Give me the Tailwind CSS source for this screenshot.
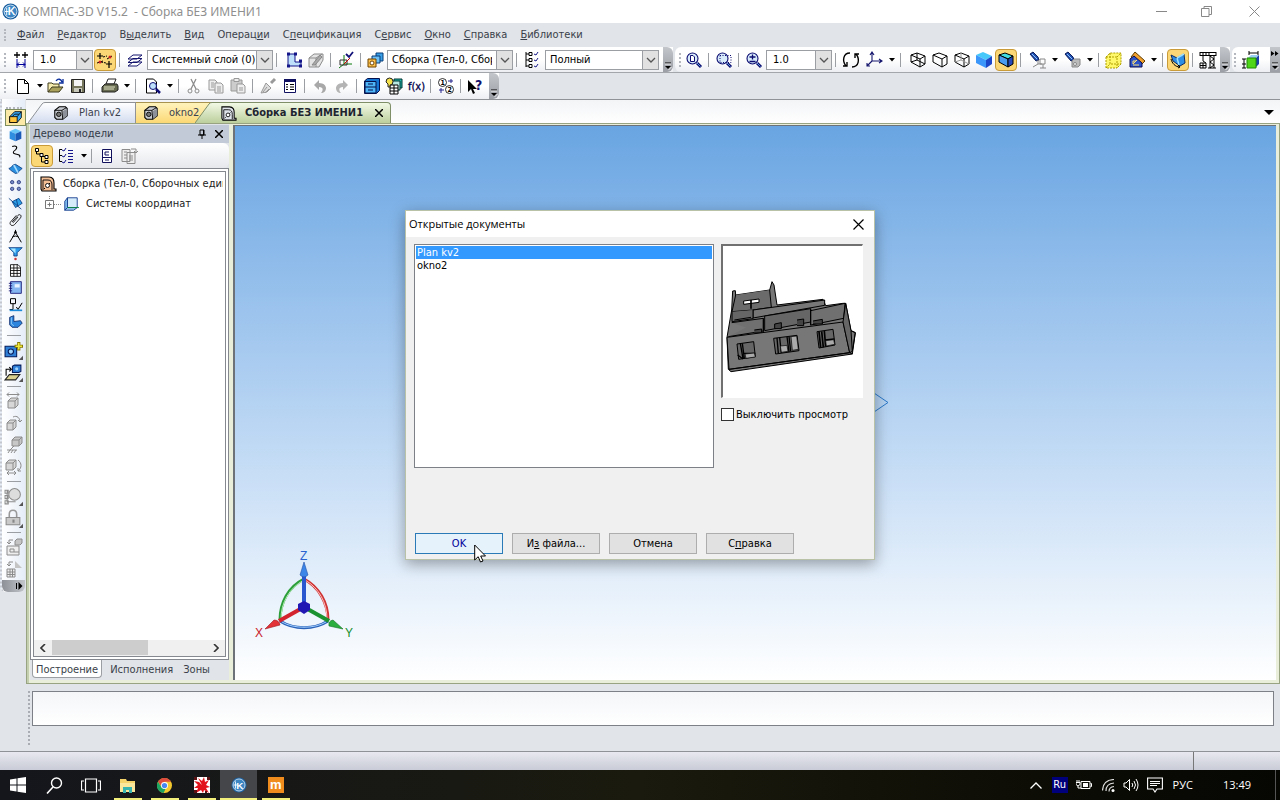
<!DOCTYPE html>
<html lang="ru">
<head>
    <meta charset="UTF-8">
    <meta name="viewport" content="width=device-width, initial-scale=1.0">
    <title>КОМПАС-3D V15.2 - Сборка БЕЗ ИМЕНИ1</title>
    <script src="https://cdn.jsdelivr.net/npm/@tailwindcss/browser@4"></script>
</head>
<body class="relative flex h-screen flex-col overflow-hidden bg-[#e1e4e8] font-['DejaVu_Sans_Condensed','Noto_Sans',sans-serif] text-[11px] leading-4 text-black">

    <!-- Shared icons -->
    <svg class="hidden">
        <symbol id="caret" viewBox="0 0 7 4"><path d="M1 0h6L4 3.500z" fill="#000"/></symbol>
        <symbol id="chevron" viewBox="0 0 10 6"><path d="M1 1l4 4 4-4" fill="none" stroke="#555" stroke-width="1.3"/></symbol>
        <symbol id="overflow" viewBox="0 0 8 8"><path d="M1 1h6" stroke="#000"/><path d="M1 4h6L4 7z" fill="#000"/><path d="M1 2h6M4.500 8l3-3" stroke="#fff" stroke-width=".8"/></symbol>
        <symbol id="logo" viewBox="0 0 18 18">
            <circle cx="9" cy="9" r="8.500" fill="#1c5f9e"/><circle cx="9" cy="9" r="6.800" fill="#3c86c4" stroke="#cfe3f4"/>
            <path d="M3 9h4M5 5v8" stroke="#fff"/>
            <text x="6" y="13" font-size="11" font-weight="bold" fill="#fff" font-family="Liberation Sans">K</text>
        </symbol>
        <symbol id="part" viewBox="0 0 18 18">
            <path d="M2 6l5-4h7l2 2v8l-5 4H4l-2-2z" fill="#c9ccd2" stroke="#000" stroke-width="1.200"/>
            <path d="M11 7l5-3v8l-5 4z" fill="#8c9098"/>
            <path d="M2 6h8l1 10M10 6l5-3" fill="none" stroke="#000"/>
            <circle cx="6.500" cy="10.500" r="2.500" fill="#777" stroke="#000"/>
        </symbol>
        <symbol id="assembly" viewBox="0 0 18 18">
            <path d="M2 2h8c4 0 5 3 5 6v6h2v2H3l-1-2z" fill="currentColor" stroke="#000" stroke-width="1.100"/>
            <path d="M4 15V5h5c3 0 4 2 4 5v5" fill="none" stroke="#000" stroke-width=".9"/>
            <circle cx="8.500" cy="10.500" r="2" fill="#fff" stroke="#000" stroke-width=".9"/><path d="M6 13l-1 1M10 9l1-1" stroke="#000"/>
        </symbol>
        <symbol id="wirebox" viewBox="0 0 18 18">
            <path d="M2 4l6-2 8 3v8l-5 3-9-5zM2 4l9 4 5-3M11 8v8" fill="none" stroke="#000"/>
        </symbol>
        <symbol id="lens" viewBox="0 0 18 18">
            <circle cx="7.500" cy="7.500" r="5.500" fill="#d7ebfb" stroke="#0b0b70" stroke-width="1.100"/>
            <path d="M12 12l4 4" stroke="#0b0b70" stroke-width="3"/><path d="M12 12l3.500 3.500" stroke="#5a9be0"/>
        </symbol>
        <symbol id="torch" viewBox="0 0 18 18">
            <path d="M1 3l3-2 5 5 1 3-3 1z" fill="#1f4fae" stroke="#0d1c5c"/><path d="M3 3l5 5" stroke="#8fc1ff"/>
        </symbol>
    </svg>

    <!-- Title bar -->
    <header class="flex h-[23px] shrink-0 items-center bg-white pl-0.5">
        <svg class="size-[17px]"><use href="#logo"/></svg>
        <h1 class="ml-1 whitespace-pre font-['Noto_Sans',sans-serif] text-[12px] text-[#8f8f8f]">КОМПАС-3D V15.2  - Сборка БЕЗ ИМЕНИ1</h1>
        <div class="ml-auto flex">
            <button type="button" aria-label="Свернуть" class="flex h-5 w-[45px] items-center justify-center"><svg class="size-[11px]" viewBox="0 0 11 11"><path d="M0 5.500h11" stroke="#888"/></svg></button>
            <button type="button" aria-label="Развернуть" class="flex h-5 w-[45px] items-center justify-center"><svg class="size-[11px]" viewBox="0 0 11 11"><path d="M.5 2.500h7.500v8H.5zM3 2.500v-2h7.500v8H8" fill="none" stroke="#888"/></svg></button>
            <button type="button" aria-label="Закрыть" class="flex h-5 w-[51px] items-center justify-center"><svg class="size-[11px]" viewBox="0 0 11 11"><path d="M.5.5l10 10M10.500.5l-10 10" stroke="#888"/></svg></button>
        </div>
    </header>

    <!-- Menu -->
    <nav class="flex h-6 shrink-0 items-center gap-[13px] pl-1 text-[#3a3f4a]">
        <span class="-mr-0.5 h-3 border-l-2 border-dotted border-[#b4b8be]"></span>
        <a href="#"><u>Ф</u>айл</a>
        <a href="#"><u>Р</u>едактор</a>
        <a href="#">В<u>ы</u>делить</a>
        <a href="#"><u>В</u>ид</a>
        <a href="#">Операц<u>и</u>и</a>
        <a href="#">С<u>п</u>ецификация</a>
        <a href="#">С<u>е</u>рвис</a>
        <a href="#"><u>О</u>кно</a>
        <a href="#"><u>С</u>правка</a>
        <a href="#"><u>Б</u>иблиотеки</a>
    </nav>

    <!-- Toolbars, first row -->
    <div class="flex h-[26px] shrink-0 gap-0.5 overflow-hidden border-b border-[#a3a6ab] [&_svg]:shrink-0 [&_button]:flex [&_button]:h-[22px] [&_button]:w-[22px] [&_button]:shrink-0 [&_button]:items-center [&_button]:justify-center">
        <div class="flex shrink-0 items-center bg-linear-to-b from-white via-white to-[#eceef2]">
            <span class="mr-1 ml-1 h-3.5 border-l-2 border-dotted border-[#b4b8be]"></span>
            <button type="button" aria-label="Шаг курсора"><svg class="size-[18px]" viewBox="0 0 18 18"><path d="M5 1v6M2 4h6M13 1v6M10 4h6" stroke="#000" stroke-width="1.300"/><path d="M5 8v9M13 8v9M5 13.500h8M7 11.500l-2 2 2 2M11 11.500l2 2-2 2" fill="none" stroke="#00009a"/></svg></button>
            <div class="ml-px flex h-5 w-[60px] border border-[#9b9ea3] bg-white">
                <select aria-label="Шаг" class="min-w-0 flex-1 appearance-none pl-1.5 outline-none"><option>1.0</option></select>
                <span class="flex w-4 items-center justify-center border-l border-[#9b9ea3] bg-[#e1e1e1]"><svg class="h-1.5 w-2.5"><use href="#chevron"/></svg></span>
            </div>
            <button type="button" aria-label="Привязки" class="ml-px rounded-sm border border-[#c99b39] bg-[#fcd775]"><svg class="size-[18px]" viewBox="0 0 18 18"><path d="M4 2v6M1 5h6M13 10v7M10 13h6" stroke="#000" stroke-width="1.200"/><path d="M1 12l6-2M11 8l5-3" stroke="#000"/><path d="M7 6l4-1M5 11l5 1" stroke="#000" stroke-dasharray="2 1"/><circle cx="14" cy="6" r="1.500" fill="#c22"/><circle cx="4" cy="11" r="1.500" fill="#c22"/></svg></button>
            <i class="mx-[3px] h-3.5 w-0.5 border-l border-[#9b9ea3]"></i>
            <button type="button" aria-label="Слои"><svg class="size-[18px]" viewBox="0 0 18 18"><path d="M2 15h9l5-4H7zM2 11.500h9l5-4H7zM2 8h9l5-4H7z" fill="#fff" stroke="#15156e"/></svg></button>
            <div class="ml-px flex h-5 w-[126px] border border-[#9b9ea3] bg-white">
                <select aria-label="Слой" class="min-w-0 flex-1 appearance-none pl-1 outline-none"><option>Системный слой (0)</option></select>
                <span class="flex w-4 items-center justify-center border-l border-[#9b9ea3] bg-[#e1e1e1]"><svg class="h-1.5 w-2.5"><use href="#chevron"/></svg></span>
            </div>
            <i class="mx-[3px] h-3.5 w-0.5 border-l border-[#9b9ea3]"></i>
            <button type="button" aria-label="Эскиз" class="ml-0.5"><svg class="size-[18px]" viewBox="0 0 18 18"><path d="M3 3h7v8h6v4H3z" fill="#bfe0fa" stroke="#15158a"/><path d="M2 1.500h3v3H2zM9 1.500h3v3H9zM2 13.500h3v3H2zM14 13.500h3v3h-3zM14 8.500h3v3h-3z" fill="#15158a"/></svg></button>
            <button type="button" aria-label="Эскиз из библиотеки" disabled><svg class="size-[18px]" viewBox="0 0 18 18"><path d="M2 7l5-4h9v6l-4 7H2zM2 7h7v9M9 7l6-4" fill="#e4e4e4" stroke="#8c8c8c"/><path d="M5 14l8-10 2 2-7 8z" fill="#aaa" stroke="#888"/></svg></button>
            <i class="mx-[3px] h-3.5 w-0.5 border-l border-[#9b9ea3]"></i>
            <button type="button" aria-label="Перестроить"><svg class="size-[18px]" viewBox="0 0 18 18"><path d="M7 4v9l-5 4M7 13h8" fill="none" stroke="#087a08"/><path d="M3 9h7v5H3z" fill="none" stroke="#333"/><path d="M7 13l6-6" stroke="#c00"/><path d="M9 3l3 3 4-5" fill="none" stroke="#101078" stroke-width="1.800"/></svg></button>
            <i class="mx-[3px] h-3.5 w-0.5 border-l border-[#9b9ea3]"></i>
            <button type="button" aria-label="Состояния"><svg class="size-[18px]" viewBox="0 0 18 18"><path d="M9 2h7v8H9z" fill="#3aa1e8" stroke="#063a78"/><path d="M5 5h8v7H5z" fill="#6cc0f5" stroke="#063a78"/><path d="M1 8h8v8H1z" fill="#ffc34d" stroke="#6d4200"/><circle cx="5" cy="12" r="2" fill="#fff" stroke="#6d4200"/></svg></button>
            <div class="flex h-5 w-[126px] border border-[#9b9ea3] bg-white">
                <select aria-label="Редактируемый объект" class="mr-1 min-w-0 flex-1 appearance-none overflow-hidden pl-1 outline-none"><option>Сборка (Тел-0, Сборочных единиц-0)</option></select>
                <span class="flex w-4 items-center justify-center border-l border-[#9b9ea3] bg-[#e1e1e1]"><svg class="h-1.5 w-2.5"><use href="#chevron"/></svg></span>
            </div>
            <i class="mx-[3px] h-3.5 w-0.5 border-l border-[#9b9ea3]"></i>
            <button type="button" aria-label="Тип загрузки"><svg class="size-[18px]" viewBox="0 0 18 18"><path d="M3 1v15M3 3h5M3 9h5M3 15h5" stroke="#000"/><path d="M6 1.500h3v3H6zM6 7.500h3v3H6zM6 13.500h3v3H6z" fill="#fff" stroke="#000"/><path d="M11 3l2 1 2-3M11 9l2 1 2-3M11 15l2 1 2-3" fill="none" stroke="#1c1c8c"/></svg></button>
            <div class="ml-0.5 flex h-5 w-[114px] border border-[#9b9ea3] bg-white">
                <select aria-label="Загрузка" class="min-w-0 flex-1 appearance-none pl-1 outline-none"><option>Полный</option></select>
                <span class="flex w-4 items-center justify-center border-l border-[#9b9ea3] bg-[#e1e1e1]"><svg class="h-1.5 w-2.5"><use href="#chevron"/></svg></span>
            </div>
            <span class="ml-1 flex h-full w-2.5 items-end justify-center self-stretch rounded-r-md bg-linear-to-b from-[#c3c6cb] to-[#9b9ea4] pb-0.5"><svg class="size-2"><use href="#overflow"/></svg></span>
        </div>

        <div class="flex shrink-0 items-center rounded-l-md bg-linear-to-b from-white via-white to-[#eceef2]">
            <span class="mr-0.5 ml-1 h-3.5 border-l-2 border-dotted border-[#b4b8be]"></span>
            <button type="button" aria-label="Показать все"><svg class="size-[18px]" viewBox="0 0 18 18"><use href="#lens"/><path d="M5.500 4.500h2.500l1.500 1.500v4.500h-4z" fill="#fff" stroke="#0b0b70"/></svg></button>
            <i class="mx-[3px] h-3.5 w-0.5 border-l border-[#9b9ea3]"></i>
            <button type="button" aria-label="Увеличить рамкой"><svg class="size-[18px]" viewBox="0 0 18 18"><use href="#lens"/><path d="M5 4.500h11v7H5z" fill="none" stroke="#0b0b70" stroke-dasharray="1 1.500"/></svg></button>
            <i class="mx-[3px] h-3.5 w-0.5 border-l border-[#9b9ea3]"></i>
            <button type="button" aria-label="Увеличить"><svg class="size-[18px]" viewBox="0 0 18 18"><use href="#lens"/><path d="M4.500 6h6M7.500 3.500v5M4.500 10.500h6" stroke="#0b0b70" stroke-width="1.300"/></svg></button>
            <div class="ml-px flex h-5 w-[66px] border border-[#9b9ea3] bg-white">
                <select aria-label="Масштаб" class="min-w-0 flex-1 appearance-none pl-1.5 outline-none"><option>1.0</option></select>
                <span class="flex w-4 items-center justify-center border-l border-[#9b9ea3] bg-[#e1e1e1]"><svg class="h-1.5 w-2.5"><use href="#chevron"/></svg></span>
            </div>
            <i class="mx-[3px] h-3.5 w-0.5 border-l border-[#9b9ea3]"></i>
            <button type="button" aria-label="Повернуть"><svg class="size-[18px]" viewBox="0 0 18 18"><path d="M8 2C1 2 0 10 4 15M1 15h4v-4M10 16c7 0 8-8 4-13M17 3h-4v4" fill="none" stroke="#000" stroke-width="1.400"/></svg></button>
            <button type="button" aria-label="Ориентация" class="ml-0.5"><svg class="size-[18px]" viewBox="0 0 18 18"><path d="M6 2v8h9M6 10l-5 5M4 4l2-3 2 3M13 8l3 2-3 2M1 12v3h3" fill="none" stroke="#15156e" stroke-width="1.100"/></svg></button>
            <span class="flex w-[11px] justify-center"><svg class="h-1 w-[7px]"><use href="#caret"/></svg></span>
            <i class="mx-[3px] h-3.5 w-0.5 border-l border-[#9b9ea3]"></i>
            <button type="button" aria-label="Каркас" class="ml-0.5"><svg class="size-[18px]" viewBox="0 0 18 18"><use href="#wirebox"/><path d="M8 2v7l-6 2M8 9l8 4" fill="none" stroke="#000"/></svg></button>
            <button type="button" aria-label="Без невидимых линий"><svg class="size-[18px]"><use href="#wirebox"/></svg></button>
            <button type="button" aria-label="Невидимые линии тонкие"><svg class="size-[18px]" viewBox="0 0 18 18"><use href="#wirebox"/><path d="M8 2v7l-6 2M8 9l8 4" fill="none" stroke="#999"/></svg></button>
            <button type="button" aria-label="Полутоновое"><svg class="size-[18px]" viewBox="0 0 18 18"><path d="M1 4l7-3 9 4-6 4z" fill="#47c8fb"/><path d="M1 4l10 5v8L1 12z" fill="#3c97fa"/><path d="M11 9l6-4v8l-6 4z" fill="#1b46c8"/></svg></button>
            <button type="button" aria-label="Полутоновое с каркасом" class="rounded-sm border border-[#c99b39] bg-[#fcd775]"><svg class="size-[18px]" viewBox="0 0 18 18"><path d="M2 4l6-2 8 3-5 3z" fill="#40dce0" stroke="#000"/><path d="M2 4l9 4v8l-9-5z" fill="#4a9cf0" stroke="#000"/><path d="M11 8l5-3v8l-5 3z" fill="#2448ba" stroke="#000"/></svg></button>
            <i class="mx-[3px] h-3.5 w-0.5 border-l border-[#9b9ea3]"></i>
            <button type="button" aria-label="Фильтр объектов" class="ml-0.5"><svg class="size-[18px]" viewBox="0 0 18 18"><use href="#torch"/><path d="M4 16l5-3h4M9 13V9M11 8h5v5h-5zM14 13v4M11 17h6" fill="none" stroke="#888"/></svg></button>
            <span class="flex w-[11px] justify-center"><svg class="h-1 w-[7px]"><use href="#caret"/></svg></span>
            <button type="button" aria-label="Фильтр тел" class="ml-0.5"><svg class="size-[18px]" viewBox="0 0 18 18"><use href="#torch"/><path d="M8 10l2-2h6v6l-2 2H8z" fill="#bbb" stroke="#888"/><circle cx="11" cy="13" r="1.500" fill="#eee" stroke="#888"/></svg></button>
            <span class="flex w-[11px] justify-center"><svg class="h-1 w-[7px]"><use href="#caret"/></svg></span>
            <i class="mx-[3px] h-3.5 w-0.5 border-l border-[#9b9ea3]"></i>
            <button type="button" aria-label="Габарит"><svg class="size-[18px]" viewBox="0 0 18 18"><path d="M1 6l4-4h11v11l-4 4H1z" fill="#fff86b"/><path d="M1 6h11v11H1zM1 6l4-4h11v11l-4 4M12 6l4-4M5 2v11h11M1 17l4-4" fill="none" stroke="#b0a000" stroke-dasharray="2 1"/></svg></button>
            <button type="button" aria-label="Сечение" class="ml-px"><svg class="size-[18px]" viewBox="0 0 18 18"><path d="M3 6l4-5 10 9-5 5z" fill="#f0a02c" stroke="#5c3b00"/><path d="M2 8l4-3 8 7v4H2z" fill="#2c54c8" stroke="#0a0a50"/><path d="M5 13v-3h3M5 14h6M5 13l4-4" fill="none" stroke="#ffe070"/></svg></button>
            <span class="flex w-[11px] justify-center"><svg class="h-1 w-[7px]"><use href="#caret"/></svg></span>
            <i class="mx-[3px] h-3.5 w-0.5 border-l border-[#9b9ea3]"></i>
            <button type="button" aria-label="Упрощённый вид" class="rounded-sm border border-[#c99b39] bg-[#fcd775]"><svg class="size-[18px]" viewBox="0 0 18 18"><path d="M2 4l6 3 7-4 1 9-5 3-7-5z" fill="#2f8fe4" stroke="#0b2b66"/><path d="M8 7l2 7M8 7l7-4" stroke="#9be0ff" stroke-width="1.500"/><path d="M2 8c1 4 4 8 9 8l-2-2M11 16l-2 1" fill="none" stroke="#000"/></svg></button>
            <i class="mx-[3px] h-3.5 w-0.5 border-l border-[#9b9ea3]"></i>
            <button type="button" aria-label="Библиотека оборудования"><svg class="size-[18px]" viewBox="0 0 18 18"><path d="M1 1.500h16M1 4.500h16M1 1v4M4 2v2M7 2v2M10 2v2M17 1v4M11 5v12M15 5v12M11 5l4 3-4 3 4 3-4 3M9 17h8M4 5v5l3 2" fill="none" stroke="#000"/><path d="M1 12h6v5H1zM1 14.500h6M4 12v5" fill="none" stroke="#000"/></svg></button>
            <span class="ml-px flex h-full w-2.5 items-end justify-center rounded-r-md bg-linear-to-b from-[#c3c6cb] to-[#9b9ea4] pb-0.5"><svg class="size-2"><use href="#overflow"/></svg></span>
        </div>

        <div class="flex min-w-0 flex-1 items-center rounded-l-md bg-linear-to-b from-white via-white to-[#eceef2]">
            <span class="mr-1 ml-0.5 h-3.5 border-l-2 border-dotted border-[#b4b8be]"></span>
            <button type="button" aria-label="Измерения"><svg class="size-[18px]" viewBox="0 0 18 18"><path d="M6 7l3-3h8l-3 3z" fill="#9bd0f5"/><path d="M14 7l3-3v9l-3 3z" fill="#1c3fa8"/><path d="M5 7h9v10H5z" fill="#4fd618" stroke="#1d8a00"/><path d="M7 2h9M7 0v4M16 0v4M2 8v9M0 8h4M0 17h4M0 13h4" stroke="#000"/></svg></button>
            <span class="ml-auto flex h-full w-2.5 flex-col items-center justify-between bg-linear-to-b from-[#c3c6cb] to-[#9b9ea4] py-0.5"><svg class="mt-0.5 h-[5px] w-2" viewBox="0 0 8 5"><path d="M0 0l3.500 2.500L0 5zM4 0l3.500 2.500L4 5z"/></svg><svg class="size-2"><use href="#overflow"/></svg></span>
        </div>
    </div>

    <!-- Toolbars, second row -->
    <div class="flex h-[26px] shrink-0 [&_svg]:shrink-0 [&_button]:flex [&_button]:h-[22px] [&_button]:w-[22px] [&_button]:shrink-0 [&_button]:items-center [&_button]:justify-center">
        <div class="flex items-center bg-linear-to-b from-white via-white to-[#eceef2]">
            <span class="mr-1.5 ml-1 h-3.5 border-l-2 border-dotted border-[#b4b8be]"></span>
            <button type="button" aria-label="Создать"><svg class="size-[18px]" viewBox="0 0 18 18"><path d="M3.500 2.500h7l4 4v10h-11zM10.500 2.500v4h4" fill="#fff" stroke="#000"/></svg></button>
            <span class="flex w-[11px] justify-center"><svg class="h-1 w-[7px]"><use href="#caret"/></svg></span>
            <button type="button" aria-label="Открыть"><svg class="size-[18px]" viewBox="0 0 18 18"><path d="M1 15V6h4l1 1h6v3" fill="#f6ecb0" stroke="#3d3a1c"/><path d="M1 15l4-5h11l-4 5z" fill="#a9a15c" stroke="#3d3a1c"/><path d="M9 4c2-3 5-2 6 1M16 2v4h-4" fill="none" stroke="#0a2e9c" stroke-width="1.300"/></svg></button>
            <button type="button" aria-label="Сохранить"><svg class="size-[18px]" viewBox="0 0 18 18"><path d="M2.500 2.500h13v13h-13z" fill="#76765c" stroke="#222"/><path d="M5 3h8v6H5z" fill="#f3f3f3"/><path d="M5 11h8v4H5z" fill="#c9c9bb"/><path d="M10 12h2v3h-2z" fill="#222"/></svg></button>
            <i class="mx-[3px] h-3.5 w-0.5 border-l border-[#9b9ea3]"></i>
            <button type="button" aria-label="Печать" class="ml-0.5"><svg class="size-[18px]" viewBox="0 0 18 18"><path d="M5 7l2-5h8l-2 5z" fill="#fff" stroke="#222"/><path d="M1 10l3-3h12l1 2v4l-3 2H1z" fill="#686c50" stroke="#222"/><path d="M3 12h10M3 10h11" stroke="#e5e5c8"/></svg></button>
            <span class="flex w-[11px] justify-center"><svg class="h-1 w-[7px]"><use href="#caret"/></svg></span>
            <i class="mx-[3px] h-3.5 w-0.5 border-l border-[#9b9ea3]"></i>
            <button type="button" aria-label="Просмотр" class="ml-0.5"><svg class="size-[18px]" viewBox="0 0 18 18"><path d="M2.500 2h7l3 3v11h-10z" fill="#fff" stroke="#000"/><circle cx="9" cy="9" r="3.500" fill="#bfe0fa" stroke="#101078"/><path d="M12 12l4 4" stroke="#101078" stroke-width="2.500"/></svg></button>
            <span class="flex w-[11px] justify-center"><svg class="h-1 w-[7px]"><use href="#caret"/></svg></span>
            <i class="mx-[3px] h-3.5 w-0.5 border-l border-[#9b9ea3]"></i>
            <button type="button" aria-label="Вырезать" disabled><svg class="size-[18px]" viewBox="0 0 18 18"><path d="M6 2l5 10M11 2L6 12" stroke="#8c8c8c" stroke-width="1.300"/><circle cx="5" cy="14" r="2" fill="none" stroke="#8c8c8c"/><circle cx="12" cy="14" r="2" fill="none" stroke="#8c8c8c"/></svg></button>
            <button type="button" aria-label="Копировать" disabled><svg class="size-[18px]" viewBox="0 0 18 18"><path d="M2 3h6l2 2v8H2z" fill="#eee" stroke="#999"/><path d="M8 6h6l2 2v8H8z" fill="#eee" stroke="#999"/><path d="M4 6h3M4 8h3M4 10h3M10 10h4M10 12h4M10 14h4" stroke="#999"/></svg></button>
            <button type="button" aria-label="Вставить" disabled><svg class="size-[18px]" viewBox="0 0 18 18"><path d="M2 3h11v11H2z" fill="#ccc" stroke="#999"/><path d="M5 1.500h5v3H5z" fill="#eee" stroke="#999"/><path d="M8 7h6l2 2v7H8z" fill="#eee" stroke="#999"/><path d="M10 11h4M10 13h4" stroke="#999"/></svg></button>
            <i class="mx-[3px] h-3.5 w-0.5 border-l border-[#9b9ea3]"></i>
            <button type="button" aria-label="Копировать свойства" disabled><svg class="size-[18px]" viewBox="0 0 18 18"><path d="M16 2l-4 4" stroke="#999" stroke-width="3"/><path d="M7 6l5 5-4 4-6 1z" fill="#ddd" stroke="#999"/><path d="M4 15l4-5M6 16l4-4" stroke="#999"/></svg></button>
            <button type="button" aria-label="Свойства"><svg class="size-[18px]" viewBox="0 0 18 18"><path d="M3.500 2.500h11v13h-11z" fill="#fff" stroke="#101060"/><path d="M3 2h12v3H3z" fill="#101060"/><path d="M5 7.500h2M9 7.500h4M5 10h2M9 10h4M5 12.500h2M9 12.500h4" stroke="#000"/></svg></button>
            <i class="mx-[3px] h-3.5 w-0.5 border-l border-[#9b9ea3]"></i>
            <button type="button" aria-label="Отменить" disabled><svg class="size-[18px]" viewBox="0 0 18 18"><path d="M3 8l5-5v3c5 0 7 3 7 5 0 3-2 5-5 5 2-2 3-6-2-6v3z" fill="#a8a8a8"/></svg></button>
            <button type="button" aria-label="Повторить" disabled><svg class="size-[18px]" viewBox="0 0 18 18"><path d="M15 8l-5-5v3C5 6 3 9 3 11c0 3 2 5 5 5-2-2-3-6 2-6v3z" fill="#b4b4b4"/></svg></button>
            <i class="mx-[3px] h-3.5 w-0.5 border-l border-[#9b9ea3]"></i>
            <button type="button" aria-label="Библиотеки"><svg class="size-[18px]" viewBox="0 0 18 18"><path d="M1.500 4l3-2.500h12v12l-3 3h-12z" fill="#1374d4" stroke="#04104c"/><path d="M2 4.500h11V16H2z" fill="#4db5f8" stroke="#04104c"/><path d="M2 10h11M5 7h5M5 13h5" stroke="#04104c" stroke-width="1.200"/></svg></button>
            <button type="button" aria-label="Справочник"><svg class="size-[18px]" viewBox="0 0 18 18"><path d="M9 2h8v9H9z" fill="#23b5a8" stroke="#033"/><path d="M7 4h8v9H7z" fill="#b8e8e4" stroke="#033"/><path d="M5 8h8v9H5zM5 11h8M5 14h8M9 8v9" fill="#fff" stroke="#000"/><path d="M1 5q0-4 3.500-4T8 4.500 5 8v2H3V7z" fill="#f6e34c" stroke="#222"/></svg></button>
            <button type="button" aria-label="Переменные"><svg class="size-[18px]" viewBox="0 0 18 18"><text x="1" y="13" font-size="11" fill="#04044c" stroke="#04044c" stroke-width=".3">f(x)</text></svg></button>
            <i class="mx-[3px] h-3.5 w-0.5 border-l border-[#9b9ea3]"></i>
            <button type="button" aria-label="Перенумеровать"><svg class="size-[18px]" viewBox="0 0 18 18"><circle cx="5.500" cy="5.500" r="4" fill="#fff" stroke="#000" stroke-width=".8"/><circle cx="12.500" cy="12.500" r="4" fill="#fff" stroke="#000" stroke-width=".8"/><text x="3.500" y="8" font-size="7" font-weight="bold">1</text><text x="10.500" y="15" font-size="7" font-weight="bold">2</text><path d="M11 4h5M14 2v4M2 13h5M4 11v5" stroke="#22228c"/></svg></button>
            <i class="mx-[3px] h-3.5 w-0.5 border-l border-[#9b9ea3]"></i>
            <button type="button" aria-label="Что это?"><svg class="size-[18px]" viewBox="0 0 18 18"><path d="M1 3v12l3-3 2 5 2-1-2-4h4z"/><text x="8" y="13" font-size="14" font-weight="bold" fill="#10106c">?</text></svg></button>
            <span class="ml-0.5 flex h-full w-2.5 items-end justify-center rounded-r-md bg-linear-to-b from-[#c3c6cb] to-[#9b9ea4] pb-0.5"><svg class="size-2"><use href="#overflow"/></svg></span>
        </div>
    </div>

    <div class="flex min-h-0 flex-1">
        <!-- Compact panel -->
        <aside class="w-[26px] shrink-0 pr-px">
            <div class="flex flex-col items-center rounded-b-md border-l-2 border-dotted border-[#c4c8ce] bg-linear-to-r from-white to-[#e6edf7] pt-2 [&_button]:flex [&_button]:w-[21px] [&_button]:items-center [&_button]:justify-center">
                <span class="w-4 border-t-2 border-dotted border-[#b4b8be]"></span>
                <button type="button" aria-label="Редактирование сборки" class="ml-1 h-[17px] border border-[#7d8c5c] bg-[#fbe9a8]"><svg class="size-[15px] shrink-0" viewBox="0 0 18 18"><path d="M2 8l6-6h8v7l-5 6H2z" fill="#38a8f4" stroke="#000"/><path d="M2 8h9v7H2z" fill="#ffc53c" stroke="#000"/><path d="M11 8l5-6M5 8l3-3h5" fill="none" stroke="#000"/></svg></button>
                <button type="button" aria-label="Деталь" class="ml-1 h-[17px]"><svg class="size-[15px]" viewBox="0 0 18 18"><path d="M2 5l7-3 7 3-7 3z" fill="#67c6f7"/><path d="M2 5l7 3v9l-7-3z" fill="#2f8ee0"/><path d="M9 8l7-3v9l-7 3z" fill="#1b5bb8"/></svg></button>
                <button type="button" aria-label="Пространственные кривые" class="ml-1 h-[17px]"><svg class="size-[15px]" viewBox="0 0 18 18"><path d="M5 3c5-2 7 1 4 4-3 2-4 4 0 5s6 1 5 4" fill="none" stroke="#000" stroke-width="1.300"/></svg></button>
                <button type="button" aria-label="Поверхности" class="ml-1 h-[17px]"><svg class="size-[15px]" viewBox="0 0 18 18"><path d="M1 9c3 0 4-5 8-5 3 2 5 3 8 5-3 1-4 6-8 6-3-2-5-3-8-6z" fill="#2b8fe0" stroke="#0b3b80"/><path d="M7 5l5 9" stroke="#a6dcff" stroke-width="2"/></svg></button>
                <button type="button" aria-label="Массивы" class="ml-1 h-[17px]"><svg class="size-[15px]" viewBox="0 0 18 18"><g fill="#7b8ec8" stroke="#26357c"><circle cx="5" cy="5" r="2"/><circle cx="13" cy="5" r="2"/><circle cx="5" cy="13" r="2"/><circle cx="13" cy="13" r="2"/></g></svg></button>
                <button type="button" aria-label="Вспомогательная геометрия" class="ml-1 h-[17px]"><svg class="size-[15px]" viewBox="0 0 18 18"><path d="M5 8l8-4 4 6-8 5z" fill="#2b9fe8" stroke="#0b3b80"/><path d="M1 4l15 13M10 5l2 9" stroke="#0b3b80"/></svg></button>
                <button type="button" aria-label="Сопряжения" class="ml-1 h-[17px]"><svg class="size-[15px]" viewBox="0 0 18 18"><path d="M5 12l7-8c2-2 5 0 3 3l-7 8c-3 3-7 0-5-3l7-8M6 13l6-7" fill="none" stroke="#000"/></svg></button>
                <button type="button" aria-label="Измерения" class="ml-1 h-[17px]"><svg class="size-[15px]" viewBox="0 0 18 18"><path d="M9 1v3M9 4L2 16M9 4l7 12M5 10c3-2 5-2 8 0" fill="none" stroke="#000" stroke-width="1.200"/><circle cx="9" cy="4" r="1.500"/></svg></button>
                <button type="button" aria-label="Фильтры" class="ml-1 h-[17px]"><svg class="size-[15px]" viewBox="0 0 18 18"><path d="M1 2h16l-6 6v4H7V8z" fill="#2c9cec" stroke="#0b3b80"/><path d="M3 3h6v6z" fill="#a7e6ff"/><circle cx="9" cy="15.500" r="1.500" fill="#c33"/></svg></button>
                <button type="button" aria-label="Спецификация" class="ml-1 h-[17px]"><svg class="size-[15px]" viewBox="0 0 18 18"><path d="M3 2h9l3 3v11H3zM3 6h12M3 9h12M3 12.500h12M7 2v14M11 2v14" fill="#fff" stroke="#000"/></svg></button>
                <button type="button" aria-label="Отчёты" class="ml-1 h-[17px]"><svg class="size-[15px]" viewBox="0 0 18 18"><path d="M3 2h13v14H3z" fill="#86b6f2" stroke="#101070"/><path d="M8 5h6v4H8z" fill="#e9f4ff"/><path d="M1 4h4M1 7h4M1 10h4M1 13h4" stroke="#101070"/></svg></button>
                <button type="button" aria-label="Элементы оформления" class="ml-1 h-[17px]"><svg class="size-[15px]" viewBox="0 0 18 18"><path d="M3 2h6v6H3zM6 8v7M2 15h4M10 12l2 3 5-8" fill="none" stroke="#000" stroke-width="1.200"/><path d="M2 16h15" stroke="#1c8ad8" stroke-width="2"/></svg></button>
                <button type="button" aria-label="Листовое тело" class="ml-1 h-[17px]"><svg class="size-[15px]" viewBox="0 0 18 18"><path d="M2 4l5-2v7l8-1 2 3-5 5H5l-3-3z" fill="#2c84dc" stroke="#0a2768"/><path d="M4 4v8l3 2" fill="none" stroke="#9ed7ff"/></svg></button>
                <i class="mt-[5px] mb-[3px] w-3.5 border-t border-[#9b9ea3]"></i>
                <button type="button" aria-label="Добавить из файла" class="h-[22px]"><svg class="size-[19px]" viewBox="0 0 18 18"><path d="M1 5h11v10H1z" fill="#2f7fd6" stroke="#051c5c"/><circle cx="6.500" cy="10" r="2.500" fill="#9fd4ff" stroke="#051c5c"/><path d="M14 1v8M10 5h8" stroke="#857700" stroke-width="3"/><path d="M14 2v6M11 5h6" stroke="#f2ea3a" stroke-width="1.500"/><path d="M18 14v4h-4z" fill="#555"/></svg></button>
                <button type="button" aria-label="Создать деталь" class="h-[22px]"><svg class="size-[19px]" viewBox="0 0 18 18"><path d="M1 16l4-5h10l-4 5z" fill="#d9cf8e" stroke="#222"/><path d="M8 3l2-1h6v6l-2 1H8z" fill="#2f7fd6" stroke="#051c5c"/><circle cx="12" cy="5.500" r="1.500" fill="#9fd4ff"/><path d="M2 12V6h4M5 4l2 2-2 2" fill="none" stroke="#000"/><path d="M18 14v4h-4z" fill="#555"/></svg></button>
                <i class="my-[3px] w-3.5 border-t border-[#9b9ea3]"></i>
                <button type="button" aria-label="Переместить" class="h-[22px]" disabled><svg class="size-[18px]" viewBox="0 0 18 18"><path d="M2 2.500h12M4 .5l-2 2 2 2M12 .5l2 2-2 2" fill="none" stroke="#8c8c8c"/><path d="M3 9l3-3h7v7l-3 3H3zM3 9h7v7M10 9l3-3" fill="#d7d7d7" stroke="#8c8c8c"/></svg></button>
                <button type="button" aria-label="Повернуть" class="h-[22px]" disabled><svg class="size-[18px]" viewBox="0 0 18 18"><path d="M2 9l3-3h6v7l-3 3H2zM2 9h6v7M8 9l3-3" fill="#d7d7d7" stroke="#8c8c8c"/><path d="M8 3c4-2 7 1 7 5M13 6l2 2 2-2" fill="none" stroke="#8c8c8c"/></svg></button>
                <button type="button" aria-label="Зафиксировать" class="h-[22px]" disabled><svg class="size-[18px]" viewBox="0 0 18 18"><path d="M7 4l3-3h7v6l-3 3H7zM7 4h7v6M14 4l3-3" fill="#c7c7c7" stroke="#8c8c8c"/><path d="M9 10l-4 4M2 14h10M3 17l2-3M6 17l2-3M9 17l2-3" stroke="#8c8c8c"/></svg></button>
                <button type="button" aria-label="Разместить" class="h-[22px]" disabled><svg class="size-[18px]" viewBox="0 0 18 18"><path d="M1 5l3-3h7v7l-3 3H1zM1 5h7v7M8 5l3-3" fill="#d7d7d7" stroke="#8c8c8c"/><path d="M13 2c4 3 4 8 0 11M13 10v3h3M2 15h9M4 13l-2 2 2 2M9 13l2 2-2 2" fill="none" stroke="#8c8c8c"/></svg></button>
                <i class="my-[3px] w-3.5 border-t border-[#9b9ea3]"></i>
                <button type="button" aria-label="Сопряжение" class="h-[22px]" disabled><svg class="size-[19px]" viewBox="0 0 18 18"><circle cx="10" cy="7" r="5.500" fill="#ddd" stroke="#8c8c8c"/><path d="M3 3v12M1 3h3v3H1zM1 8h3v3H1zM1 13h3v3H1zM4 14h7" fill="none" stroke="#8c8c8c"/><path d="M18 14v4h-4z" fill="#555"/></svg></button>
                <button type="button" aria-label="Блокировка" class="h-[22px]" disabled><svg class="size-[19px]" viewBox="0 0 18 18"><path d="M5 8V5c0-5 7-5 7 0v3" fill="none" stroke="#999" stroke-width="1.500"/><path d="M2 8h13v7H2z" fill="#c9c9c9" stroke="#8c8c8c"/><path d="M8 10h2v3H8z" fill="#888"/><path d="M18 14v4h-4z" fill="#555"/></svg></button>
                <i class="my-[3px] w-3.5 border-t border-[#9b9ea3]"></i>
                <button type="button" aria-label="Чертёж" class="h-[22px]" disabled><svg class="size-[18px]" viewBox="0 0 18 18"><path d="M2 8h12v9H2zM5 11h4v3H5zM9 14h5" fill="#eee" stroke="#8c8c8c"/><path d="M10 3l2-2h5v4l-2 2h-5z" fill="#c4c4c4" stroke="#8c8c8c"/><path d="M8 2H4v4M2 4l2 2 2-2" fill="none" stroke="#8c8c8c"/></svg></button>
                <button type="button" aria-label="Спецификация сборки" class="h-[22px]" disabled><svg class="size-[18px]" viewBox="0 0 18 18"><path d="M2 9h8v8H2zM2 12h8M2 14.500h8M5 9v8M7.500 9v8" fill="#eee" stroke="#8c8c8c"/><path d="M10 8V1l7 7z" fill="#c4c4c4"/><path d="M8 2H4v4M2 4l2 2 2-2" fill="none" stroke="#8c8c8c"/></svg></button>
                <span class="flex h-3 w-full items-center justify-end rounded-b-md bg-linear-to-r from-[#8d9096] to-[#c3c6cb] pr-0.5"><svg class="h-2 w-2" viewBox="0 0 8 8"><path d="M1.500 1v6" stroke="#000"/><path d="M3.500 0l4 4-4 4z"/></svg></span>
            </div>
        </aside>

        <main class="flex min-w-0 flex-1 flex-col">
            <!-- Document tabs -->
            <div class="flex h-6 shrink-0 items-end border-t border-[#8f9398] bg-linear-to-b from-[#f2f4f6] to-white pl-0.5 [&_svg]:shrink-0">
                <button type="button" class="flex h-[21px] items-stretch text-[#3b4250]">
                    <svg class="h-[21px] w-[17px]" viewBox="0 0 17 21"><defs><linearGradient id="tabBlue" x2="0" y2="1"><stop stop-color="#fff"/><stop offset="1" stop-color="#d3dcef"/></linearGradient></defs><path d="M0 21L14 2q1-1.500 3-1.500V21z" fill="url(#tabBlue)"/><path d="M0 21L14 2q1-1.500 3-1.500" fill="none" stroke="#8f9398"/></svg>
                    <span class="flex w-[91px] items-center gap-2.5 border-t border-r border-[#8f9398] bg-linear-to-b from-white to-[#d3dcef] pl-2"><svg class="size-4"><use href="#part"/></svg>Plan kv2</span>
                </button>
                <button type="button" class="flex h-[21px] w-[76px] items-center gap-2.5 border-t border-[#a89450] bg-linear-to-b from-[#fff3bb] to-[#fbd873] pl-[7px] text-[#3b4250]"><svg class="size-4"><use href="#part"/></svg>okno2</button>
                <div class="z-1 -ml-[17px] flex h-[21px] items-stretch">
                    <svg class="h-[21px] w-[17px]" viewBox="0 0 17 21"><defs><linearGradient id="tabGreen" x2="0" y2="1"><stop stop-color="#f2f9e6"/><stop offset="1" stop-color="#bccf9c"/></linearGradient></defs><path d="M0 21L14 2q1-1.500 3-1.500V21z" fill="url(#tabGreen)"/><path d="M0 21L14 2q1-1.500 3-1.500" fill="none" stroke="#7f8f68"/></svg>
                    <span class="flex w-[179px] items-center rounded-tr-sm border-t border-r border-[#7f8f68] bg-linear-to-b from-[#f2f9e6] to-[#bccf9c] pl-2">
                        <svg class="size-[17px] text-[#dfe3ea]"><use href="#assembly"/></svg>
                        <b class="ml-2 whitespace-nowrap text-[#1d2430]">Сборка БЕЗ ИМЕНИ1</b>
                        <button type="button" aria-label="Закрыть вкладку" class="mr-[7px] ml-auto"><svg class="size-2" viewBox="0 0 8 8"><path d="M0 0l8 8M8 0L0 8" stroke="#000" stroke-width="1.500"/></svg></button>
                    </span>
                </div>
                <button type="button" aria-label="Список окон" class="mr-1.5 mb-2 ml-auto"><svg class="h-[5px] w-2.5" viewBox="0 0 10 5"><path d="M0 0h10L5 5z"/></svg></button>
            </div>

            <div class="flex min-h-0 flex-1 border border-[#98a382] bg-[#e9eedb] pr-[3px] pb-[3px] pl-[3px] shadow-[inset_2px_0_0_#c3cfae]">
                <!-- Model tree -->
                <section class="flex w-[199px] shrink-0 flex-col bg-[#e1e4e8]">
                    <div class="mt-px flex h-[18px] shrink-0 items-center bg-[#c2cad7] pl-[3px] text-[#333b48]">
                        <h2>Дерево модели</h2>
                        <button type="button" aria-label="Закрепить" class="ml-auto"><svg class="size-[10px]" viewBox="0 0 10 10"><path d="M3 1h4v5H3zM1 6h8M5 6v4M6.500 1v5" fill="none" stroke="#000"/></svg></button>
                        <button type="button" aria-label="Закрыть панель" class="mr-1.5 ml-2"><svg class="size-2" viewBox="0 0 8 8"><path d="M0 0l8 8M8 0L0 8" stroke="#000" stroke-width="1.500"/></svg></button>
                    </div>
                    <div class="flex h-[25px] shrink-0 items-center rounded-r-md bg-linear-to-b from-white to-[#e6e8ec] pl-px [&_button]:flex [&_button]:h-[22px] [&_button]:w-[22px] [&_button]:items-center [&_button]:justify-center">
                        <button type="button" aria-label="Структура" class="rounded-sm border border-[#c99b39] bg-[#fcd775]"><svg class="size-[18px] shrink-0" viewBox="0 0 18 18"><path d="M3.500 4v3h5v8h4M8.500 9.500h4" fill="none" stroke="#000"/><path d="M2.500 1.500h3v3h-3zM7 6.500h3v3H7zM12 8.500h3v3h-3zM12 13.500h3v3h-3z" fill="#fff" stroke="#000"/></svg></button>
                        <button type="button" aria-label="Состав" class="ml-0.5"><svg class="size-[18px]" viewBox="0 0 18 18"><path d="M5 2.500H2.500v12H5M2.500 8.500H5" fill="none" stroke="#000"/><path d="M5 3l2 1 2-3M5 9l2 1 2-3M5 15l2 1 2-3" fill="none" stroke="#14148c"/><path d="M11 3.500h5M11 6.500h5M11 9.500h5M11 12.500h5M11 15.500h5" stroke="#14148c"/></svg></button>
                        <span class="flex w-3 justify-center"><svg class="h-1 w-[7px]"><use href="#caret"/></svg></span>
                        <i class="mr-1 ml-0.5 h-3.5 border-l border-[#9b9ea3]"></i>
                        <button type="button" aria-label="Дополнительное окно"><svg class="size-[18px]" viewBox="0 0 18 18"><path d="M4.500 2.500h9v13h-9zM4.500 10.500h9M7 5h4M7 5v3h4M7 13h4" fill="#fff" stroke="#10105c"/></svg></button>
                        <button type="button" aria-label="Состав объекта" disabled><svg class="size-[18px]" viewBox="0 0 18 18"><path d="M2 2.500h8v12H2zM7 5.500h8v11H7z" fill="#eee" stroke="#8c8c8c"/><path d="M4 5h3M4 8h3M4 11h3M9 9h4M9 11h4M9 13h4M11 2h5v4M14 4l2 2 2-2" fill="none" stroke="#8c8c8c"/></svg></button>
                    </div>
                    <div class="flex min-h-0 flex-1 flex-col border border-[#85898f] bg-white p-0.5">
                        <div class="flex flex-1 flex-col border border-[#85898f]">
                            <ul role="tree" class="mr-0.5 flex-1 overflow-hidden pt-0.5 whitespace-nowrap text-[#222]">
                                <li role="treeitem" class="flex h-5 items-center gap-1.5 pl-[5px]"><svg class="size-[18px] shrink-0 text-[#f5bf96]"><use href="#assembly"/></svg>Сборка (Тел-0, Сборочных единиц-0)</li>
                                <li role="treeitem" class="flex h-5 items-center pl-2.5">
                                    <svg class="h-4 w-[18px]" viewBox="0 0 18 16"><path d="M5.500-2v5" stroke="#888" stroke-dasharray="1 1"/><path d="M1.500 4.500h8v8h-8zM3.500 8.500h4M5.500 6.500v4" fill="#fff" stroke="#777"/><path d="M10 8.500h8" stroke="#888" stroke-dasharray="1 1"/></svg>
                                    <svg class="mr-[7px] ml-px size-4" viewBox="0 0 18 18"><path d="M5 2h11v11H5z" fill="#d5ecfb" stroke="#123a8c"/><path d="M5 2v11l-3 3V6z" fill="#82bff0" stroke="#123a8c"/><path d="M2 16h10l4-3H5z" fill="#9ccdf4" stroke="#123a8c"/><path d="M5 13h13" stroke="#0a8a3c"/></svg>
                                    Системы координат
                                </li>
                            </ul>
                            <div class="flex h-4 items-center bg-[#f0f0f0]">
                                <button type="button" aria-label="Влево" class="flex w-[18px] justify-center"><svg class="h-2 w-1.5" viewBox="0 0 6 8"><path d="M5 0L1 4l4 4" fill="none" stroke="#333" stroke-width="1.600"/></svg></button>
                                <div class="h-full flex-1"><div class="h-[15px] w-[62%] bg-[#cdcdcd]"></div></div>
                                <button type="button" aria-label="Вправо" class="flex w-[18px] justify-center"><svg class="h-2 w-1.5" viewBox="0 0 6 8"><path d="M1 0l4 4-4 4" fill="none" stroke="#333" stroke-width="1.600"/></svg></button>
                            </div>
                        </div>
                    </div>
                    <div class="flex h-5 shrink-0 items-start gap-2 pl-0.5 text-[#3a3f4a]">
                        <button type="button" class="h-[18px] rounded-b-sm border border-t-0 border-[#9b9ea3] bg-white px-[3px] pt-0.5">Построение</button>
                        <button type="button" class="h-[18px] pt-0.5">Исполнения</button>
                        <button type="button" class="ml-0.5 h-[18px] pt-0.5">Зоны</button>
                    </div>
                </section>

                <!-- 3D view -->
                <section class="relative mt-px ml-1 min-w-0 flex-1 overflow-hidden border-t border-l-2 border-[#6c7278] bg-linear-to-b from-[#69a5e2] to-white">
                    <svg class="absolute bottom-[36px] left-[13px] h-[98px] w-[112px]" viewBox="248 547 112 98">
                        <path d="M280 621C280 604 288 588 304 580" fill="none" stroke="#2d9f3a" stroke-width="3"/><path d="M281 620C281 604 289 589 304 581" fill="none" stroke="#b9efbc"/>
                        <path d="M304 580C319 588 328 604 328 621" fill="none" stroke="#cf3434" stroke-width="3"/><path d="M305 581C319 589 327 604 327 620" fill="none" stroke="#ffc0c0"/>
                        <path d="M280 622C294 631 314 631 328 622" fill="none" stroke="#2a62b8" stroke-width="3"/><path d="M282 623C294 630 314 630 326 623" fill="none" stroke="#a4d0ff"/>
                        <path d="M304 607V575" stroke="#2a56d0" stroke-width="4"/><path d="M304 563l4 13q-4 4-8 0z" fill="#3c86e8" stroke="#2552a8" stroke-width=".6"/>
                        <path d="M304 608L279 622" stroke="#d2232e" stroke-width="4"/><path d="M265 630l9-9q5 0 6 5z" fill="#e33238" stroke="#9c1a20" stroke-width=".6"/>
                        <path d="M304 608l25 14" stroke="#1a9230" stroke-width="4"/><path d="M343 630l-14-3q-1-5 4-6z" fill="#2cae3e" stroke="#147024" stroke-width=".6"/>
                        <path d="M298 605l6-3 6 3v6l-6 4-6-4z" fill="#2118b4"/>
                        <g font-size="12" font-family="Liberation Sans"><text x="300" y="561" fill="#2a62d0">Z</text><text x="255" y="638" fill="#c8202a">X</text><text x="345" y="638" fill="#17902c">Y</text></g>
                    </svg>
                    <svg class="absolute top-[267px] left-[639px] h-5 w-4" viewBox="0 0 16 20"><path d="M0 0l14 9.500L0 19" fill="none" stroke="#2a78c8"/></svg>
                </section>
            </div>
        </main>
    </div>

    <!-- Property panel -->
    <section class="flex h-[67px] shrink-0 items-start pt-[7px] pr-1.5 pl-7">
        <span class="mr-0.5 h-[54px] border-l-2 border-dotted border-[#a9adb3]"></span>
        <input type="text" aria-label="Параметры" class="h-[35px] min-w-0 flex-1 border border-[#7d8187] bg-linear-to-b from-[#f4f6f8] to-white outline-none">
    </section>
    <div class="flex h-[19px] shrink-0 border-t border-[#8f9398] bg-linear-to-b from-[#e8e9f0] to-[#c9cbd6]"><span class="ml-auto w-[87px] border-l border-[#777]"></span></div>

    <!-- Taskbar -->
    <footer class="flex h-[30px] shrink-0 items-center bg-linear-to-r from-[#15161c] via-[#1a1a0e] to-[#060603] text-white [&_button]:flex [&_button]:h-full [&_button]:w-[37px] [&_button]:items-center [&_button]:justify-center">
        <button type="button" aria-label="Пуск" class="-ml-px"><svg class="size-4" viewBox="0 0 16 16"><path d="M0 2.500l6.500-1v6H0zM7.500 1.300L16 0v7.500H7.500zM0 8.500h6.500v6L0 13.600zM7.500 8.500H16V16l-8.500-1.300z" fill="#fff"/></svg></button>
        <button type="button" aria-label="Поиск"><svg class="size-[17px]" viewBox="0 0 17 17"><circle cx="10.500" cy="6" r="5" fill="none" stroke="#fff" stroke-width="1.400"/><path d="M7 10l-6 6.500" stroke="#fff" stroke-width="1.600"/></svg></button>
        <button type="button" aria-label="Представление задач" class="-ml-px"><svg class="h-[15px] w-5" viewBox="0 0 20 15"><path d="M4.500 1h11v13h-11zM3 3H.5v9H3M17 3h2.500v9H17" fill="none" stroke="#fff" stroke-width="1.200"/></svg></button>
        <button type="button" aria-label="Проводник" class="relative"><svg class="size-[17px]" viewBox="0 0 17 17"><path d="M1 3V2h6l1 2h8v11H1z" fill="#f5d36b"/><path d="M1 6h15v9H1z" fill="#fbe79c"/><path d="M4 16v-6h9v6h-3v-3H7v3z" fill="#38b4b0"/></svg><span class="absolute bottom-0 h-0.5 w-7 bg-[#f4f07c]"></span></button>
        <button type="button" aria-label="Chrome" class="relative"><svg class="size-[15px]" viewBox="0 0 16 16"><circle cx="8" cy="8" r="8" fill="#f3c82e"/><path d="M1 4a8 8 0 0 1 14 0H8L5 9z" fill="#dd4b3e"/><path d="M1 4l4 6 4 2-2 4A8 8 0 0 1 1 4z" fill="#1da462"/><circle cx="8" cy="8" r="3.700" fill="#fff"/><circle cx="8" cy="8" r="2.800" fill="#4687f4"/></svg><span class="absolute bottom-0 h-0.5 w-7 bg-[#f4f07c]"></span></button>
        <button type="button" aria-label="Irfan" class="relative"><svg class="size-4" viewBox="0 0 16 16"><path d="M0 0h16v16H0z" fill="#fff"/><path d="M8 8L4 1l4 3 2-4 1 5 4-2-3 5 4 2-4 1 3 5-5-3-1 3-2-3-5 3 2-5H0l4-3-4-4 5 1z" fill="#e3131b"/><path d="M0 0h3v3H0zM13 0h3v3h-3zM0 13h3v3H0zM11 14h2v2h-2z" fill="#5b1212"/></svg><span class="absolute bottom-0 h-0.5 w-7 bg-[#f4f07c]"></span></button>
        <button type="button" aria-label="КОМПАС-3D" class="relative bg-[#44464a]"><svg class="size-4"><use href="#logo"/></svg><span class="absolute bottom-0 h-0.5 w-full bg-[#f4f07c]"></span></button>
        <button type="button" aria-label="Movavi" class="relative"><svg class="size-4" viewBox="0 0 16 16"><path d="M0 0h16v16H0z" fill="#f08c1e"/><text x="2" y="12" font-size="13" font-weight="bold" fill="#fff" font-family="Liberation Sans">m</text></svg><span class="absolute bottom-0 h-0.5 w-7 bg-[#f4f07c]"></span></button>

        <div class="ml-auto flex items-center">
            <svg class="h-[7px] w-3" viewBox="0 0 12 7"><path d="M.5 6.500L6 1l5.500 5.500" fill="none" stroke="#fff" stroke-width="1.300"/></svg>
            <span class="ml-2.5 w-4 bg-[#00007c] text-center">Ru</span>
            <svg class="ml-2 h-3 w-4" viewBox="0 0 16 12"><path d="M5 2.500h9v7H5zM14.500 4.500h1v3h-1M0 3.500h4v2q-2 3-4 0zM1 1v2M3 1v2M2 7v2h3" fill="none" stroke="#fff"/><path d="M7 4h5v4H7z" fill="#fff"/></svg>
            <svg class="ml-2.5 size-[13px]" viewBox="0 0 13 13"><path d="M.5 11.500Q1 1 12 .5M4 12Q4 4.500 12 4M7 12.500Q7 8 12 7.500" fill="none" stroke="#ddd" stroke-width="1.200"/><circle cx="11" cy="11.500" r="1.500" fill="#fff"/></svg>
            <svg class="ml-2 h-3.5 w-4" viewBox="0 0 16 14"><path d="M1 5h2l3.500-3.500v11L3 9H1zM9 5q1.500 2 0 4M11 3q3 4 0 8M13 1q4 6 0 12" fill="none" stroke="#fff"/></svg>
            <svg class="ml-2 size-4" viewBox="0 0 16 16"><path d="M.6 1h14.800v11H10l-2 3-2-3H.6zM3 4.500h10M3 6.500h10M3 8.500h7" fill="none" stroke="#fff" stroke-width="1.100"/></svg>
            <span class="ml-2.5 font-['Open_Sans',sans-serif]">РУС</span>
            <time class="ml-[30px] font-['Open_Sans',sans-serif]">13:49</time>
            <span class="ml-6 h-[30px] w-[5px] border-l border-[#555]"></span>
        </div>
    </footer>

    <!-- Open documents dialog -->
    <div role="dialog" aria-labelledby="dlgTitle" class="absolute top-[210px] left-[405px] z-10 w-[470px] border border-[#b9c2a6] bg-[#f0f0f0] shadow-[0_4px_14px_rgba(0,0,0,0.35)]">
        <div class="flex h-[26px] items-center bg-white pl-[3px]">
            <h2 id="dlgTitle" class="font-['Open_Sans',sans-serif]">Открытые документы</h2>
            <button type="button" aria-label="Закрыть" class="mr-2.5 ml-auto"><svg class="size-[11px]" viewBox="0 0 11 11"><path d="M.5.5l10 10M10.500.5l-10 10" stroke="#000" stroke-width="1.200"/></svg></button>
        </div>
        <div class="flex gap-[7px] px-2 pt-[7px]">
            <ul role="listbox" aria-label="Документы" class="h-[224px] w-[300px] border border-[#7d8187] bg-white p-px leading-[13px]">
                <li role="option" aria-selected="true" class="bg-[#3399ff] pl-px text-white">Plan kv2</li>
                <li role="option" aria-selected="false" class="pl-px">okno2</li>
            </ul>
            <div>
                <div class="h-[154px] w-[142px] border-t-2 border-r border-b border-l-2 border-[#707070] border-r-white border-b-white bg-white">
                    <svg class="h-[150px] w-[140px]" viewBox="40 18 420 450" stroke="#000" stroke-width="3" stroke-linejoin="round">
                        <path d="M52 292L66 210 69 153 77 152 78 165 180 150 187 125 193 135 202 195 340 178 348 197 400 190 408 190 424 272 437 278 428 342 64 395 56 388z" fill="#777"/>
                        <path d="M78 165L67 215 130 210 185 202 180 150" fill="#6b6b6b"/>
                        <path d="M102 183l46-6v10l-46 6z" fill="#fff"/><path d="M124 180v26" stroke-width="5"/>
                        <path d="M130 210L345 180v16l-215 38z" fill="#777"/>
                        <path d="M67 215v30l63-9v-26M165 228l138-22v40L165 272z" fill="#666"/>
                        <path d="M66 248l95-13v45M161 235v38l-105 17M303 212l103-22-4 45-99 20zM303 206v50" fill="#707070"/>
                        <path d="M74 240l50-8M310 243l28-5v14h-28M195 252l20-4v18h-20zM262 240l20-3v20h-20M134 270l22-3v12h-22" fill="#444"/>
                        <path d="M52 292L400 246 420 338 58 388z" fill="#777"/>
                        <path d="M400 246l8-56 16 82 4 62-8 4z" fill="#666"/>
                        <path d="M424 272l13 6-9 56M58 388L420 338l8 4" fill="none"/>
                        <path d="M82 312l50-7 5 45-50 8z" fill="#666"/><path d="M98 310l6 45M84 345l16 12M92 310l8 46M104 340h33" stroke-width="4"/><path d="M106 342l28-3 3 12-28 4z" fill="#aaa" stroke-width="2"/>
                        <path d="M192 295l70-9 6 46-70 10z" fill="#666"/><path d="M210 293l5 46M232 290l6 46M238 289l5 45M202 294l4 46" stroke-width="4"/><path d="M244 290l17-2 5 40-18 3zM212 318l20-2 3 18-20 3z" fill="#aaa" stroke-width="2"/>
                        <path d="M322 275l48-7 6 47-48 9z" fill="#666"/><path d="M328 275l5 48M336 274l5 48M344 273l4 47M346 300l28-3" stroke-width="5"/><path d="M348 302l24-3 3 14-25 5z" fill="#aaa" stroke-width="2"/>
                    </svg>
                </div>
                <label class="mt-2.5 flex items-center gap-0.5 whitespace-nowrap leading-[13px]"><input type="checkbox" class="size-[13px] appearance-none border border-[#333] bg-white">Выключить просмотр</label>
            </div>
        </div>
        <div class="mt-[65px] mb-[5px] ml-[9px] flex gap-[9px] [&_button]:h-[21px] [&_button]:w-[88px] [&_button]:border">
            <button type="button" class="border-[#2a7ab8] bg-[#e5f1fb] text-[#00009a]">OK</button>
            <button type="button" class="border-[#adadad] bg-[#e1e1e1]">И<u>з</u> файла...</button>
            <button type="button" class="border-[#adadad] bg-[#e1e1e1]">Отмена</button>
            <button type="button" class="border-[#adadad] bg-[#e1e1e1]">С<u>п</u>равка</button>
        </div>
        <!-- Mouse pointer -->
        <svg class="absolute top-[333px] left-[68px] h-[19px] w-3" viewBox="0 0 12 19"><path d="M.7 1v15l3.500-3.300L6.500 18l2.500-1-2.300-5h4.800z" fill="#fff" stroke="#000"/></svg>
    </div>
</body>
</html>
